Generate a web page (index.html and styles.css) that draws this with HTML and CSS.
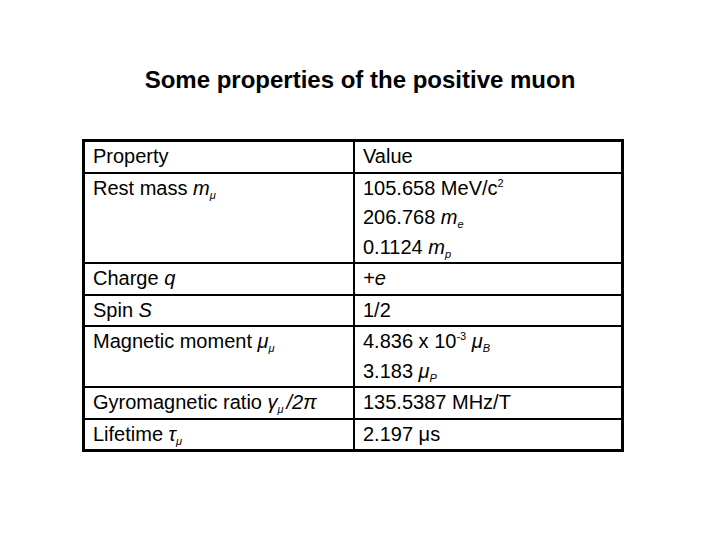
FILE: index.html
```html
<!DOCTYPE html>
<html>
<head>
<meta charset="utf-8">
<link rel="stylesheet" href="styles.css">
</head>
<body>
<div class="slide">
  <h1 class="title">Some properties of the positive muon</h1>
  <table class="props">
    <tr><td class="c1">Property</td><td class="c2">Value</td></tr>
    <tr><td class="c1">Rest mass <i>m</i><sub><i>μ</i></sub></td><td class="c2">105.658 MeV/c<sup>2</sup><br>206.768 <i>m</i><sub><i>e</i></sub><br>0.1124 <i>m</i><sub><i>p</i></sub></td></tr>
    <tr><td class="c1">Charge <i>q</i></td><td class="c2"><i>+e</i></td></tr>
    <tr><td class="c1">Spin <i>S</i></td><td class="c2">1/2</td></tr>
    <tr><td class="c1">Magnetic moment <i>μ</i><sub><i>μ</i></sub></td><td class="c2">4.836 x 10<sup>-3</sup> <i>μ</i><sub><i>B</i></sub><br>3.183 <i>μ</i><sub><i>P</i></sub></td></tr>
    <tr><td class="c1">Gyromagnetic ratio <i>γ</i><sub><i>μ</i></sub><i>/2π</i></td><td class="c2">135.5387 MHz/T</td></tr>
    <tr><td class="c1">Lifetime <i>τ</i><sub><i>μ</i></sub></td><td class="c2">2.197 μs</td></tr>
  </table>
</div>
</body>
</html>
```
FILE: styles.css
```css
html, body {
  margin: 0;
  padding: 0;
  background: #ffffff;
}
.slide {
  width: 720px;
  height: 540px;
  font-family: "Liberation Sans", Arial, sans-serif;
  color: #000;
  padding-top: 64px;
  box-sizing: border-box;
}
.title {
  margin: 0;
  text-align: center;
  font-size: 24px;
  font-weight: bold;
  line-height: 32px;
}
.props {
  border-collapse: collapse;
  margin: 43px 0 0 82px;
  border: 3px solid #000;
  font-size: 20px;
}
.props td {
  border: 2px solid #000;
  vertical-align: top;
  line-height: 29.5px;
  padding: 0 0 0 8px;
}
.props .c1 { width: 260px; }
.props .c2 { width: 258px; }
.props sub {
  font-size: 11px;
  vertical-align: -4px;
  line-height: 0;
  margin-right: 3px;
}
.props sup {
  font-size: 11px;
  vertical-align: 8px;
  line-height: 0;
}
```
